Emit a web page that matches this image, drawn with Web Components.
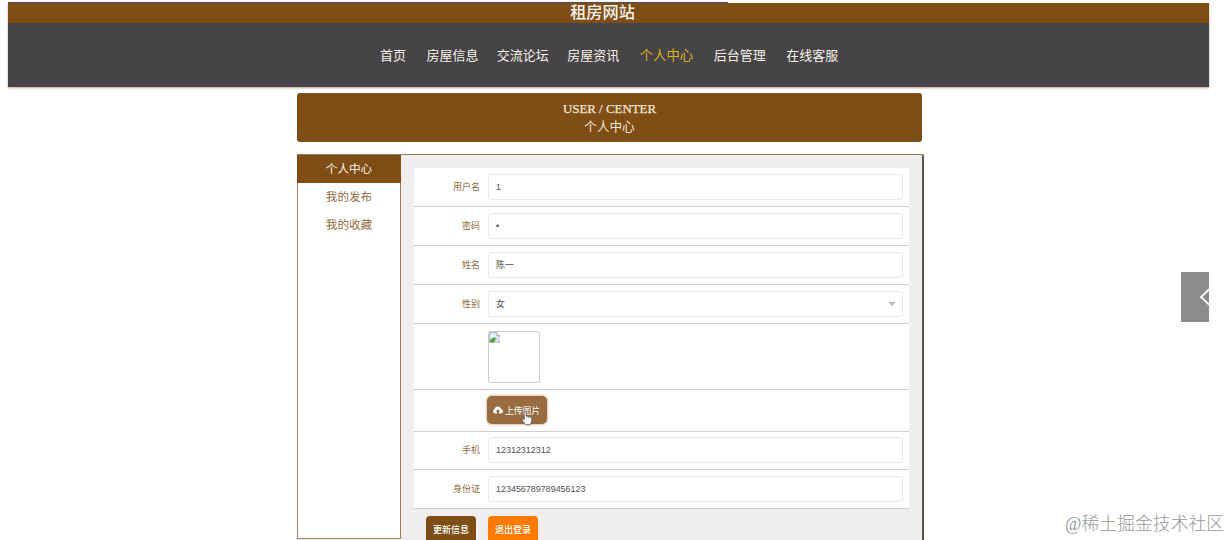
<!DOCTYPE html>
<html lang="zh-CN">
<head>
<meta charset="utf-8">
<title>租房网站</title>
<style>
  html, body {
    margin: 0;
    height: 540px;
    overflow: hidden;
  }

  body {
    position: relative;
    background: #fff;
    font-family: "Liberation Sans", "Noto Sans CJK SC", sans-serif;
  }
</style>
</head>
<body>
<rental-page></rental-page>
<script>
/**
 * Base class which renders an element's static template.
 */
class BaseElement extends HTMLElement {
  constructor() {
    super();
    this.attachShadow({ mode: 'open' });
    const template = document.createElement('template');
    template.innerHTML = this.template();
    this.shadowRoot.appendChild(template.content.cloneNode(true));
  }
}

/**
 * Site header: title strip and main menu.
 */
class SiteHeader extends BaseElement {
  template() {
    return `
      <style>
        :host {
          display: block;
          color: #f7f1ec;
          box-shadow: 0 1px 2px rgba(125, 78, 22, 0.5);
        }

        .progress {
          height: 1px;
          width: 720px;
          background: #505068;
        }

        .title {
          height: 20px;
          line-height: 18px;
          padding-right: 12px;
          background: #7e4e16;
          text-align: center;
          font-size: 16.2px;
          font-weight: 500;
        }

        nav {
          display: flex;
          box-sizing: border-box;
          height: 64px;
          padding: 1px 0 0 372px;
          align-items: center;
          background: #464446;
        }
      </style>
      <div class="progress"></div>
      <div class="title">租房网站</div>
      <nav><slot></slot></nav>
    `;
  }
}

/**
 * Entry of the main menu.
 */
class MenuItem extends BaseElement {
  template() {
    return `
      <style>
        :host {
          display: block;
          margin-right: 18.3px;
          font-size: 13px;
          line-height: 20px;
          white-space: nowrap;
        }

        :host([wide]) {
          margin-right: 20.5px;
        }

        :host([selected]) {
          font-size: 13.4px;
          color: #dcb21c;
        }
      </style>
      <slot></slot>
    `;
  }
}

/**
 * Banner with an English heading over the Chinese one.
 */
class PageBanner extends BaseElement {
  template() {
    return `
      <style>
        :host {
          display: flex;
          flex-direction: column;
          box-sizing: border-box;
          height: 49px;
          padding-top: 7px;
          border-radius: 3px;
          background: #7e4e16;
          color: #f6e6d4;
          text-align: center;
          line-height: 18px;
          font-size: 12.6px;
        }

        .english {
          font: 12.9px/18px "Liberation Serif", serif;
          -webkit-text-stroke: 0.25px #f6e6d4;
        }
      </style>
      <div class="english"><slot name="english"></slot></div>
      <div><slot></slot></div>
    `;
  }
}

/**
 * Side menu of the user centre.
 */
class SideMenu extends BaseElement {
  template() {
    return `
      <style>
        :host {
          display: block;
          box-sizing: border-box;
          width: 104px;
          height: 384px;
          border: 1px solid #a08058;
          border-top: 0;
          background: #fff;
          color: #8e6b3d;
          font-size: 11.6px;
          text-align: center;
        }

        ::slotted(div) {
          height: 28px;
          line-height: 28px;
        }

        ::slotted(.selected) {
          margin: 0 -1px;
          background: #7e4e16;
          color: #fff5eb;
        }
      </style>
      <slot></slot>
    `;
  }
}

/**
 * Row of the form: right aligned label and its control.
 */
class FormRow extends BaseElement {
  static get observedAttributes() {
    return ['label'];
  }

  template() {
    return `
      <style>
        :host {
          display: flex;
          box-sizing: border-box;
          height: 39px;
          padding: 6px 6px 0 0;
          border-bottom: 1px solid #cfcfd3;
          background: #fff;
        }

        label {
          width: 66px;
          margin-right: 8px;
          color: #8e6b3d;
          font-size: 9px;
          line-height: 27px;
          text-align: right;
        }
      </style>
      <label></label>
      <slot></slot>
    `;
  }

  attributeChangedCallback(name, oldValue, value) {
    this.shadowRoot.querySelector('label').textContent = value;
  }
}

/**
 * Text field, with a drop-down arrow if the select attribute is set.
 */
class TextField extends BaseElement {
  template() {
    return `
      <style>
        :host {
          display: flex;
          flex: 1;
          box-sizing: border-box;
          align-items: center;
          justify-content: space-between;
          height: 26px;
          padding: 0 6px 0 7px;
          border: 1px solid #e9e9eb;
          border-radius: 3px;
          color: #505050;
          font-size: 8.95px;
          line-height: 24px;
        }

        .arrow {
          display: none;
          border: 4px solid transparent;
          border-top-color: #bdbdbd;
          border-bottom: 0;
        }

        :host([select]) .arrow {
          display: block;
        }
      </style>
      <span><slot></slot></span>
      <span class="arrow"></span>
    `;
  }
}

/**
 * Square preview with the browser's missing picture icon.
 */
class PhotoPreview extends BaseElement {
  template() {
    return `
      <style>
        :host {
          display: block;
          box-sizing: border-box;
          width: 52px;
          height: 52px;
          margin-top: 1px;
          border: 1px solid #cacad0;
          border-radius: 3px;
        }

        svg {
          display: block;
        }
      </style>
      <svg width="11" height="11" viewBox="0 0 12 12">
        <path d="M.5 11.5V.5h7.8l3.2 3.2v2L8.6 8.2 6.2 11.5z" fill="#dce8f5" stroke="#a9abb0"/>
        <path d="M8.3.5v3.2h3.2" fill="#fff" stroke="#a9abb0"/>
        <path d="M1 11V9.2q3-4.5 6.8-2.5L5.5 11z" fill="#4ba342"/>
        <path d="M2 4.5q1-2 2.5-.8Q6 3.5 6 5H2z" fill="#fff"/>
        <path d="M8.5 11.5l3-3v3z" fill="#eee" stroke="#a9abb0" stroke-width=".8"/>
      </svg>
    `;
  }
}

/**
 * Upload button, shown hovered by the hand pointer.
 */
class UploadButton extends BaseElement {
  template() {
    return `
      <style>
        :host {
          display: block;
          position: relative;
          margin-left: -1px;
        }

        button {
          display: flex;
          align-items: center;
          gap: 2px;
          width: 60px;
          height: 28px;
          padding: 0 0 0 6px;
          border: 0;
          border-radius: 5px;
          background: #986c40;
          box-shadow: 0 0 3px #b98545;
          color: #fff;
          font: inherit;
          font-size: 8.8px;
          white-space: nowrap;
        }

        .cloud {
          flex: none;
        }

        .pointer {
          position: absolute;
          left: 34px;
          top: 14px;
        }
      </style>
      <button type="button">
        <svg class="cloud" width="10" height="8" viewBox="0 0 10 8">
          <path d="M2.5 7.5Q0 7.5 0 5.3 0 3.6 1.7 3.2 2 .5 4.8.5q2.6 0 3.2 2.4 2 .3 2 2.4 0 2.2-2.5 2.2H6V5.6h1.2L5 3 2.8 5.6H4v1.9z" fill="#fff"/>
        </svg>
        <slot></slot>
      </button>
      <svg class="pointer" width="12" height="16" viewBox="0 0 12 16">
        <path d="M3.2 1.8Q4.4.3 5.2 1.8v4.1l4.3.9q1.6.4 1.5 2.2l-.5 2.9-1.1 2.9H4.6L1.1 10.2Q.6 8.5 2 8.7l1.2.9z" fill="#fff" stroke="#504a48" stroke-width=".8"/>
        <path d="M5.4 6v2.2M7.3 6.6v1.8M9.1 7v1.6" stroke="#777" stroke-width=".5"/>
      </svg>
    `;
  }
}

/**
 * Action button below the form.
 */
class ActionButton extends BaseElement {
  template() {
    return `
      <style>
        button {
          display: block;
          width: 50px;
          height: 28px;
          padding: 0;
          border: 0;
          border-radius: 4px;
          background: var(--button-color, #7e4e16);
          color: #fff;
          font: inherit;
          font-size: 9px;
          font-weight: 500;
          line-height: 28px;
          white-space: nowrap;
        }
      </style>
      <button type="button"><slot></slot></button>
    `;
  }
}

/**
 * Collapsed drawer handle at the right edge.
 */
class DrawerHandle extends BaseElement {
  template() {
    return `
      <style>
        :host {
          display: block;
          position: absolute;
          left: 1181px;
          top: 272px;
          width: 28px;
          height: 50px;
          background: #8c8c8c;
        }
      </style>
      <svg width="28" height="50" viewBox="0 0 28 50">
        <path d="M28.5 17L20 25l8.5 8" fill="none" stroke="#fff" stroke-width="1.8"/>
      </svg>
    `;
  }
}

/**
 * Community mark over the bottom right corner.
 */
class CommunityMark extends BaseElement {
  template() {
    return `
      <style>
        :host {
          position: absolute;
          left: 1065px;
          top: 511px;
          color: #999;
          font: 300 17.85px/26px "Liberation Serif", "Noto Sans CJK SC", serif;
          white-space: nowrap;
        }
      </style>
      <slot></slot>
    `;
  }
}

/**
 * The whole user centre page.
 */
class RentalPage extends BaseElement {
  template() {
    return `
      <style>
        :host {
          display: block;
          padding: 2px 22px 0 8px;
        }

        .content {
          width: 625px;
          margin: 6px 0 0 289px;
        }

        .panel {
          display: flex;
          box-sizing: border-box;
          width: 627px;
          height: 400px;
          margin-top: 12px;
          border-top: 1px solid #8c7b5c;
          border-right: 2px solid #5b5345;
          border-top-right-radius: 2px;
          background: #f0eeef;
        }

        .form {
          width: 495px;
          margin: 13px 0 0 13px;
        }

        .photo {
          height: 66px;
        }

        .upload {
          height: 42px;
        }

        .phone {
          height: 38px;
          padding-top: 5px;
        }

        .actions {
          display: flex;
          gap: 12px;
          padding: 7px 0 0 12px;
        }

        .exit {
          --button-color: #ff7a00;
        }
      </style>
      <site-header>
        <menu-item wide>首页</menu-item>
        <menu-item>房屋信息</menu-item>
        <menu-item>交流论坛</menu-item>
        <menu-item wide>房屋资讯</menu-item>
        <menu-item wide selected>个人中心</menu-item>
        <menu-item wide>后台管理</menu-item>
        <menu-item>在线客服</menu-item>
      </site-header>
      <div class="content">
        <page-banner><span slot="english">USER / CENTER</span>个人中心</page-banner>
        <div class="panel">
          <side-menu>
            <div class="selected">个人中心</div>
            <div>我的发布</div>
            <div>我的收藏</div>
          </side-menu>
          <div class="form">
            <form-row label="用户名"><text-field>1</text-field></form-row>
            <form-row label="密码"><text-field>•</text-field></form-row>
            <form-row label="姓名"><text-field>陈一</text-field></form-row>
            <form-row label="性别"><text-field select>女</text-field></form-row>
            <form-row class="photo"><photo-preview></photo-preview></form-row>
            <form-row class="upload"><upload-button>上传图片</upload-button></form-row>
            <form-row class="phone" label="手机"><text-field>12312312312</text-field></form-row>
            <form-row label="身份证"><text-field>123456789789456123</text-field></form-row>
            <div class="actions">
              <action-button>更新信息</action-button>
              <action-button class="exit">退出登录</action-button>
            </div>
          </div>
        </div>
      </div>
      <drawer-handle></drawer-handle>
      <community-mark>@稀土掘金技术社区</community-mark>
    `;
  }
}

// Register custom elements
customElements.define('site-header', SiteHeader);
customElements.define('menu-item', MenuItem);
customElements.define('page-banner', PageBanner);
customElements.define('side-menu', SideMenu);
customElements.define('form-row', FormRow);
customElements.define('text-field', TextField);
customElements.define('photo-preview', PhotoPreview);
customElements.define('upload-button', UploadButton);
customElements.define('action-button', ActionButton);
customElements.define('drawer-handle', DrawerHandle);
customElements.define('community-mark', CommunityMark);
customElements.define('rental-page', RentalPage);
</script>
</body>
</html>
